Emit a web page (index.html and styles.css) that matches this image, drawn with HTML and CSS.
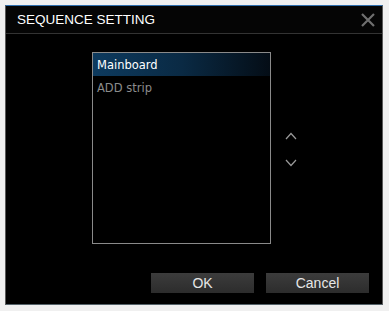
FILE: index.html
```html
<!DOCTYPE html>
<html lang="en">
<head>
    <meta charset="UTF-8">
    <title>Sequence Setting</title>
    <link rel="stylesheet" href="styles.css">
</head>
<body>
    <div class="dialog">
        <div class="title-bar">
            <span class="title">SEQUENCE SETTING</span>
            <svg class="close" width="14" height="14" viewBox="0 0 14 14">
                <path d="M1 1 L13 13 M13 1 L1 13" stroke="#6f6f6f" stroke-width="2.2"/>
            </svg>
        </div>
        <div class="body">
            <div class="list-row">
                <ul class="list">
                    <li class="item selected">Mainboard</li>
                    <li class="item">ADD strip</li>
                </ul>
                <div class="arrows">
                    <svg width="12" height="8" viewBox="0 0 12 8">
                        <path d="M1 7 L6 1.5 L11 7" fill="none" stroke="#9a9a9a" stroke-width="1.2"/>
                    </svg>
                    <svg width="12" height="8" viewBox="0 0 12 8">
                        <path d="M1 1 L6 6.5 L11 1" fill="none" stroke="#9a9a9a" stroke-width="1.2"/>
                    </svg>
                </div>
            </div>
            <div class="buttons">
                <button class="btn">OK</button>
                <button class="btn">Cancel</button>
            </div>
        </div>
    </div>
</body>
</html>
```

FILE: styles.css
```css
body {
    margin: 0;
    padding: 5px;
    background: #f0f0f0;
    font-family: "Liberation Sans", Arial, sans-serif;
}

.dialog {
    width: 378px;
    height: 300px;
    box-sizing: border-box;
    background: #000;
    border: 1px solid #5a5a5a;
    border-top: 1px solid #2f6fae;
    border-bottom-color: #55636a;
    display: flex;
    flex-direction: column;
}

.title-bar {
    height: 27px;
    border-bottom: 1px solid #333;
    display: flex;
    align-items: center;
    justify-content: space-between;
    padding: 0 7px 0 11px;
    background: #050505;
}

.title {
    color: #fff;
    font-size: 13.5px;
}

.close {
    display: block;
}

.body {
    flex: 1;
    display: flex;
    flex-direction: column;
    padding: 18px 13px 11px 86px;
}

.list-row {
    display: flex;
    align-items: center;
    gap: 14px;
}

.list {
    margin: 0;
    padding: 0;
    list-style: none;
    width: 179px;
    height: 192px;
    box-sizing: border-box;
    border: 1px solid #8a8a8a;
}

.item {
    height: 23px;
    line-height: 24px;
    padding-left: 4px;
    font-family: "DejaVu Sans", sans-serif;
    font-size: 11.5px;
    color: #8c8c8c;
}

.item.selected {
    color: #fff;
    background: linear-gradient(90deg, #0d3a5e 0%, #0a2a44 50%, #040d16 100%);
}

.arrows {
    display: flex;
    flex-direction: column;
    gap: 19px;
    margin-top: 2px;
}

.arrows svg {
    display: block;
}

.buttons {
    margin-top: auto;
    display: flex;
    justify-content: flex-end;
    gap: 12px;
}

.btn {
    width: 103px;
    height: 20px;
    border: none;
    background: linear-gradient(180deg, #3c3c3c 0%, #2c2c2c 100%);
    color: #e6e6e6;
    font-family: "Liberation Sans", Arial, sans-serif;
    font-size: 14px;
    padding: 0;
}
```
